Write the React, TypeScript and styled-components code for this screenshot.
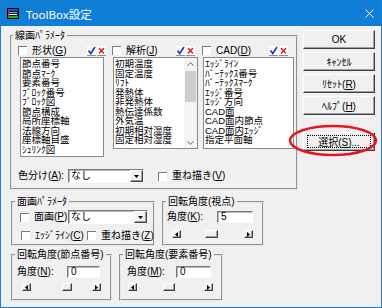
import styled, { createGlobalStyle, css } from 'styled-components'

const GlobalStyle = createGlobalStyle`
  body {
    margin: 0;
    font-family: "Liberation Sans", "Noto Sans CJK JP", sans-serif;
    font-size: 10px;
    color: #000;
  }
  u {
    text-decoration-thickness: 1px;
    text-underline-offset: 1px;
  }
`

const raised = css`
  border: 1px solid;
  border-color: #fff #404040 #404040 #fff;
  box-shadow: inset -1px -1px 0 #a0a0a0;
  background: #f0f0f0;
`

const sunken = css`
  border: 1px solid;
  border-color: #7a7a7a #fff #fff #7a7a7a;
  box-shadow: inset 1px 1px 0 #b8b8b8;
  background: #fff;
`

const Window = styled.div`
  width: 382px;
  height: 308px;
  box-sizing: border-box;
  border: 1px solid #1a7fd4;
  background: #f0f0f0;
  display: flex;
  flex-direction: column;
  overflow: hidden;
`

const TitleBar = styled.div`
  height: 25px;
  flex: none;
  background: #0f7ed6;
  display: flex;
  align-items: center;
  gap: 7px;
  padding: 0 7px 0 6px;
  color: #fff;
  font-family: "Noto Sans", "Noto Sans CJK JP", sans-serif;
  font-size: 11.5px;
`

const CloseMark = styled.svg`
  margin-left: auto;
`

const Content = styled.div`
  display: flex;
  flex: 1;
  padding: 4px 6px 0 9px;
`

const LeftCol = styled.div`
  display: flex;
  flex-direction: column;
  align-items: flex-start;
`

const RightCol = styled.div`
  display: flex;
  flex-direction: column;
  gap: 3px;
  width: 72px;
  margin-left: auto;
`

const Group = styled.fieldset<{ $w: number; $pad: string; $ml?: number }>`
  box-sizing: border-box;
  width: ${p => p.$w}px;
  min-width: 0;
  margin: 0 0 0 ${p => p.$ml ?? 0}px;
  padding: ${p => p.$pad};
  border: 2px groove #e6e6e6;
`

const Legend = styled.legend<{ $ml: number }>`
  padding: 0 2px;
  margin-left: ${p => p.$ml}px;
  line-height: 11px;
  height: 11px;
  white-space: nowrap;
`

const GroupRow = styled.div<{ $mt: number }>`
  display: flex;
  margin-top: ${p => p.$mt}px;
`

const Row = styled.div<{ $mt?: number; $ml?: number; $h: number }>`
  display: flex;
  align-items: center;
  height: ${p => p.$h}px;
  margin-top: ${p => p.$mt ?? 0}px;
  margin-left: ${p => p.$ml ?? 0}px;
`

const ListColumns = styled.div`
  display: flex;
  align-items: flex-start;
`

const Column = styled.div<{ $w: number; $ml: number }>`
  display: flex;
  flex-direction: column;
  flex: none;
  width: ${p => p.$w}px;
  margin-left: ${p => p.$ml}px;
`

const ColHead = styled.div<{ $pr: number }>`
  display: flex;
  align-items: center;
  height: 13px;
  padding-right: ${p => p.$pr}px;
`

const CheckItem = styled.label<{ $w?: number; $ml?: number }>`
  display: flex;
  align-items: center;
  gap: 5px;
  flex: none;
  ${p => p.$w !== undefined && `width: ${p.$w}px;`}
  margin-left: ${p => p.$ml ?? 0}px;
  line-height: 12px;
  white-space: nowrap;
`

const CheckBox = styled.span`
  width: 9px;
  height: 9px;
  box-sizing: border-box;
  flex: none;
  background: #fff;
  border-top: 1px solid #7a7a7a;
  border-left: 1px solid #7a7a7a;
`

const Marks = styled.span`
  margin-left: auto;
  display: flex;
`

const ListBox = styled.div<{ $w: number; $h: number; $ml: number }>`
  box-sizing: border-box;
  width: ${p => p.$w}px;
  height: ${p => p.$h}px;
  margin-left: ${p => p.$ml}px;
  background: #fff;
  border: 1px solid #8a8a8a;
  display: flex;
  overflow: hidden;
`

const ListItems = styled.ul`
  list-style: none;
  margin: 0;
  padding: 1px 0 0 1px;
  flex: 1;
  min-width: 0;
  font-size: 9.5px;
`

const ListItem = styled.li`
  height: 9.5px;
  line-height: 9.5px;
  white-space: nowrap;
`

const VScroll = styled.div`
  width: 13px;
  flex: none;
  display: flex;
  flex-direction: column;
  align-items: center;
  background: #f4f4f4;
  padding: 4px 0 3px;
`

const VThumb = styled.span`
  width: 11px;
  height: 31px;
  margin-top: 5px;
  background: #cdcdcd;
`

const Spacer = styled.span`
  flex: 1;
`

const FieldLabel = styled.span<{ $w: number }>`
  width: ${p => p.$w}px;
  flex: none;
  line-height: 12px;
  white-space: nowrap;
`

const Dropdown = styled.div<{ $w: number }>`
  ${sunken}
  box-sizing: border-box;
  width: ${p => p.$w}px;
  height: 14px;
  display: flex;
  align-items: center;
  padding-left: 2px;
  line-height: 12px;
`

const DropBtn = styled.span`
  ${raised}
  box-sizing: border-box;
  margin-left: auto;
  width: 13px;
  height: 12px;
  display: flex;
  align-items: center;
  justify-content: center;
`

const TextBox = styled.div<{ $w: number }>`
  ${sunken}
  box-sizing: border-box;
  width: ${p => p.$w}px;
  height: 12px;
  padding-left: 3px;
  line-height: 10px;
`

const HScroll = styled.div<{ $w: number; $ml: number; $mt: number }>`
  display: flex;
  flex: none;
  width: ${p => p.$w}px;
  height: 8px;
  margin-left: ${p => p.$ml}px;
  margin-top: ${p => p.$mt}px;
`

const ScrollArrow = styled.span`
  ${raised}
  box-sizing: border-box;
  width: 9px;
  height: 8px;
  flex: none;
  display: flex;
  align-items: center;
  justify-content: center;
`

const Track = styled.div`
  flex: 1;
  display: flex;
`

const Thumb = styled.span<{ $ml: number; $w: number }>`
  ${raised}
  box-sizing: border-box;
  width: ${p => p.$w}px;
  height: 8px;
  margin-left: ${p => p.$ml}px;
`

const Button = styled.button`
  ${raised}
  box-sizing: border-box;
  width: 72px;
  height: 19px;
  padding: 0;
  display: flex;
  align-items: center;
  justify-content: center;
  font: inherit;
  color: #000;
`

const FocusRing = styled.span`
  flex: 1;
  align-self: stretch;
  margin: 2px 3px;
  border: 1px dotted #000;
  display: flex;
  align-items: center;
  justify-content: center;
`

const SelectWrap = styled.div`
  position: relative;
  margin-top: 14px;
`

const Ellipse = styled.svg`
  position: absolute;
  left: -15px;
  top: -8px;
  pointer-events: none;
`

const AppIcon = () => (
  <svg width="12" height="11" viewBox="0 0 12 11">
    <rect x="0.5" y="0.5" width="11" height="10" fill="#101830" stroke="#000" />
    <rect x="1" y="1" width="10" height="2" fill="#2050d0" />
    <rect x="2" y="4" width="8" height="1" fill="#40d0e0" />
    <rect x="2" y="6" width="8" height="1" fill="#ffffff" />
    <rect x="1" y="1" width="1" height="9" fill="#e02020" />
    <rect x="2" y="8" width="9" height="2" fill="#20b020" />
  </svg>
)

const MarkPair = () => (
  <svg width="20" height="10" viewBox="0 0 20 10">
    <rect x="0" y="0" width="9" height="9" fill="#fff" />
    <rect x="10" y="0" width="9" height="9" fill="#fff" />
    <path d="M0 9.5H9M10 9.5H19" stroke="#909090" />
    <path d="M1.5 4.5L3.8 7.5L8 1" stroke="#1530e0" strokeWidth="1.6" fill="none" />
    <path d="M12 2L17 7.5M17 2L12 7.5" stroke="#e01818" strokeWidth="1.4" />
  </svg>
)

const TriDown = () => (
  <svg width="5" height="3" viewBox="0 0 5 3">
    <path d="M0 0H5L2.5 3Z" fill="#000" />
  </svg>
)

const TriSide = ({ dir }: { dir: 'l' | 'r' }) => (
  <svg width="3" height="5" viewBox="0 0 3 5">
    <path d={dir === 'l' ? 'M3 0V5L0 2.5Z' : 'M0 0V5L3 2.5Z'} fill="#000" />
  </svg>
)

const Chevron = ({ up }: { up?: boolean }) => (
  <svg width="7" height="4" viewBox="0 0 7 4">
    <path d={up ? 'M0.5 3.5L3.5 0.8L6.5 3.5' : 'M0.5 0.5L3.5 3.2L6.5 0.5'} stroke="#606060" fill="none" />
  </svg>
)

const shapeItems = ['節点番号', '節点ﾏｰｸ', '要素番号', 'ﾌﾞﾛｯｸ番号', 'ﾌﾞﾛｯｸ図', '節点構成', '局所座標軸', '法線方向', '座標軸目盛', 'ｼｭﾘﾝｸ図']
const analysisItems = ['初期温度', '固定温度', 'ﾘﾌﾄ', '発熱体', '非発熱体', '熱伝達係数', '外気温', '初期相対湿度', '固定相対湿度']
const cadItems = ['ｴｯｼﾞﾗｲﾝ', 'ﾊﾞｰﾃｯｸｽ番号', 'ﾊﾞｰﾃｯｸｽﾏｰｸ', 'ｴｯｼﾞ番号', 'ｴｯｼﾞ方向', 'CAD面', 'CAD面内節点', 'CAD面内ｴｯｼﾞ', '指定平面軸']

const Slider = ({ w, ml, mt, thumbAt, thumbW }: { w: number; ml: number; mt: number; thumbAt: number; thumbW: number }) => (
  <HScroll $w={w} $ml={ml} $mt={mt}>
    <ScrollArrow><TriSide dir="l" /></ScrollArrow>
    <Track><Thumb $ml={thumbAt} $w={thumbW} /></Track>
    <ScrollArrow><TriSide dir="r" /></ScrollArrow>
  </HScroll>
)

export default function App() {
  return (
    <>
      <GlobalStyle />
      <Window>
        <TitleBar>
          <AppIcon />
          <span>ToolBox設定</span>
          <CloseMark width="9" height="9" viewBox="0 0 9 9">
            <path d="M0.5 0.5L8.5 8.5M8.5 0.5L0.5 8.5" stroke="#fff" strokeWidth="1" />
          </CloseMark>
        </TitleBar>
        <Content>
          <LeftCol>
            <Group $w={288} $pad="3px 2px 5px 6px">
              <Legend $ml={-5}>線画ﾊﾟﾗﾒｰﾀ</Legend>
              <ListColumns>
                <Column $w={89} $ml={0}>
                  <ColHead $pr={0}>
                    <CheckItem><CheckBox /><span>形状(<u>G</u>)</span></CheckItem>
                    <Marks><MarkPair /></Marks>
                  </ColHead>
                  <ListBox $w={84} $h={100} $ml={2}>
                    <ListItems>{shapeItems.map(t => <ListItem key={t}>{t}</ListItem>)}</ListItems>
                  </ListBox>
                </Column>
                <Column $w={86} $ml={5}>
                  <ColHead $pr={2}>
                    <CheckItem><CheckBox /><span>解析(<u>J</u>)</span></CheckItem>
                    <Marks><MarkPair /></Marks>
                  </ColHead>
                  <ListBox $w={85} $h={92} $ml={1}>
                    <ListItems>{analysisItems.map(t => <ListItem key={t}>{t}</ListItem>)}</ListItems>
                    <VScroll>
                      <Chevron up />
                      <VThumb />
                      <Spacer />
                      <Chevron />
                    </VScroll>
                  </ListBox>
                </Column>
                <Column $w={92} $ml={4}>
                  <ColHead $pr={5}>
                    <CheckItem><CheckBox /><span>CAD(<u>D</u>)</span></CheckItem>
                    <Marks><MarkPair /></Marks>
                  </ColHead>
                  <ListBox $w={91} $h={92} $ml={1}>
                    <ListItems>{cadItems.map(t => <ListItem key={t}>{t}</ListItem>)}</ListItems>
                  </ListBox>
                </Column>
              </ListColumns>
              <Row $mt={12} $h={14}>
                <FieldLabel $w={50}>色分け(<u>A</u>):</FieldLabel>
                <Dropdown $w={76}>なし<DropBtn><TriDown /></DropBtn></Dropdown>
                <CheckItem $ml={14}><CheckBox /><span>重ね描き(<u>V</u>)</span></CheckItem>
              </Row>
            </Group>

            <GroupRow $mt={6}>
              <Group $w={144} $ml={1} $pad="3px 2px 3px 7px">
                <Legend $ml={-5}>面画ﾊﾟﾗﾒｰﾀ</Legend>
                <Row $h={14}>
                  <CheckItem $w={48}><CheckBox /><span>面画(<u>P</u>):</span></CheckItem>
                  <Dropdown $w={80}>なし<DropBtn><TriDown /></DropBtn></Dropdown>
                </Row>
                <Row $mt={6} $h={11} $ml={1}>
                  <CheckItem $w={66}><CheckBox /><span>ｴｯｼﾞﾗｲﾝ(<u>C</u>)</span></CheckItem>
                  <CheckItem><CheckBox /><span>重ね描き(<u>Z</u>)</span></CheckItem>
                </Row>
              </Group>
              <Group $w={102} $ml={7} $pad="4px 2px 5px 3px">
                <Legend $ml={-1}>回転角度(視点)</Legend>
                <Row $h={12}>
                  <FieldLabel $w={50}>角度(<u>K</u>):</FieldLabel>
                  <TextBox $w={36}>5</TextBox>
                </Row>
                <Slider w={81} ml={5} mt={7} thumbAt={24} thumbW={13} />
              </Group>
            </GroupRow>

            <GroupRow $mt={3}>
              <Group $w={101} $ml={1} $pad="6px 2px 8px 4px">
                <Legend $ml={-2}>回転角度(節点番号)</Legend>
                <Row $h={12}>
                  <FieldLabel $w={50}>角度(<u>N</u>):</FieldLabel>
                  <TextBox $w={33}>0</TextBox>
                </Row>
                <Slider w={79} ml={5} mt={5} thumbAt={31} thumbW={10} />
              </Group>
              <Group $w={104} $ml={7} $pad="6px 2px 8px 6px">
                <Legend $ml={-4}>回転角度(要素番号)</Legend>
                <Row $h={12}>
                  <FieldLabel $w={49}>角度(<u>M</u>):</FieldLabel>
                  <TextBox $w={35}>0</TextBox>
                </Row>
                <Slider w={85} ml={1} mt={5} thumbAt={26} thumbW={12} />
              </Group>
            </GroupRow>
          </LeftCol>

          <RightCol>
            <Button>OK</Button>
            <Button>ｷｬﾝｾﾙ</Button>
            <Button><span>ﾘｾｯﾄ(<u>R</u>)</span></Button>
            <Button><span>ﾍﾙﾌﾟ(<u>H</u>)</span></Button>
            <SelectWrap>
              <Button>
                <FocusRing><span>選択(<u>S</u>)...</span></FocusRing>
              </Button>
              <Ellipse width="90" height="33" viewBox="0 0 90 33">
                <ellipse cx="45" cy="16.5" rx="43" ry="14.5" fill="none" stroke="#e8141e" strokeWidth="2.5" />
              </Ellipse>
            </SelectWrap>
          </RightCol>
        </Content>
      </Window>
    </>
  )
}
